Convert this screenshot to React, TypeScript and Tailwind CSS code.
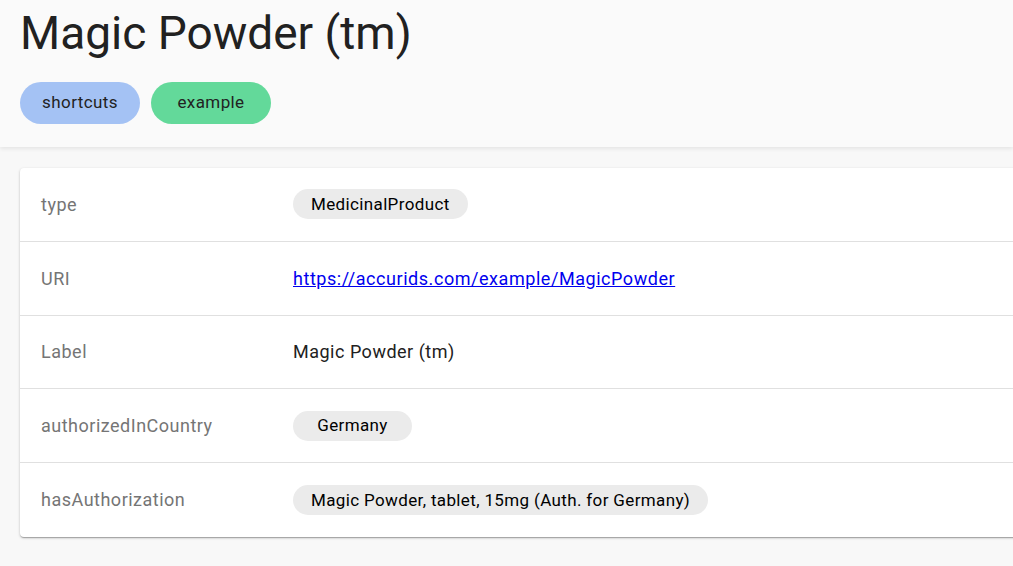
import React from "react";

const rows: { label: string; kind: "chip" | "link" | "text"; value: string }[] = [
  { label: "type", kind: "chip", value: "MedicinalProduct" },
  { label: "URI", kind: "link", value: "https://accurids.com/example/MagicPowder" },
  { label: "Label", kind: "text", value: "Magic Powder (tm)" },
  { label: "authorizedInCountry", kind: "chip", value: "Germany" },
  { label: "hasAuthorization", kind: "chip", value: "Magic Powder, tablet, 15mg (Auth. for Germany)" },
];

export default function App() {
  return (
    <div
      className="w-[1013px] h-[566px] overflow-hidden bg-[#f8f8f8] text-[#212121]"
      style={{ fontFamily: "Roboto, 'Liberation Sans', sans-serif" }}
    >
      <header className="relative z-10 bg-[#fafafa] px-5 pt-[5px] pb-[23px] shadow-[0_2px_4px_rgba(0,0,0,0.08)]">
        <h1 className="text-[46px] leading-[56px] font-normal text-[#212121]">Magic Powder (tm)</h1>
        <div className="mt-[21px] flex gap-[11px]">
          <span className="flex h-[42px] min-w-[120px] items-center justify-center rounded-full bg-[#a4c2f4] px-[18px] text-[17px] tracking-[0.4px] text-[#222]">
            shortcuts
          </span>
          <span className="flex h-[42px] min-w-[120px] items-center justify-center rounded-full bg-[#63d99a] px-[18px] text-[17px] tracking-[0.4px] text-[#222]">
            example
          </span>
        </div>
      </header>
      <main className="pl-5 pt-[21px]">
        <div className="w-[1100px] rounded bg-white shadow-[0_1px_3px_rgba(0,0,0,0.2),0_1px_1px_rgba(0,0,0,0.14),0_2px_1px_-1px_rgba(0,0,0,0.12)]">
          {rows.map((r, i) => (
            <div
              key={r.label}
              className={`flex h-[73.75px] items-center pl-[21px] ${i < rows.length - 1 ? "border-b border-[#e0e0e0]" : ""}`}
            >
              <div className="w-[252px] shrink-0 text-[18px] tracking-[0.5px] text-[#757575]">{r.label}</div>
              <div className="text-[18px]">
                {r.kind === "chip" && (
                  <span className="inline-flex h-[30px] min-w-[119px] items-center justify-center rounded-full bg-[#ebebeb] px-[18px] pt-[1px] text-[17px] tracking-[0.36px] text-black">
                    {r.value}
                  </span>
                )}
                {r.kind === "link" && (
                  <a href="#" className="tracking-[0.55px] text-[#0000ee] underline">
                    {r.value}
                  </a>
                )}
                {r.kind === "text" && <span className="tracking-[0.5px] text-[#212121]">{r.value}</span>}
              </div>
            </div>
          ))}
        </div>
      </main>
    </div>
  );
}
